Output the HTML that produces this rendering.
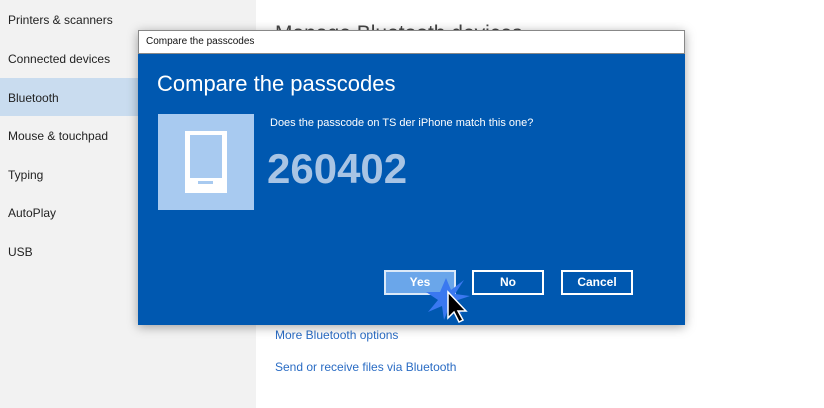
<!DOCTYPE html>
<html><head><style>
body{margin:0;width:824px;height:408px;overflow:hidden;background:#fff;font-family:"Liberation Sans",sans-serif;position:relative}
.side{position:absolute;left:0;top:0;width:256px;height:408px;background:#f2f2f2}
.it{position:absolute;left:8px;font-size:12px;color:#222}
.sel{position:absolute;left:0;top:78px;width:138px;height:38px;background:#c9dcef}
.link{position:absolute;left:275px;font-size:12px;color:#2a6cc4}
.dlg{position:absolute;left:138px;top:30px;width:547px;height:295px;box-shadow:0 2px 10px rgba(0,0,0,.35);background:#0058b0}
.tb{height:24px;background:#fff;border:1px solid #888;box-sizing:border-box;font-size:10px;line-height:22px;padding-left:7px;color:#111}
.btn{position:absolute;top:240px;width:72px;height:25px;border:2px solid #fff;box-sizing:border-box;color:#fff;font-size:12px;font-weight:bold;text-align:center;line-height:21px}
</style></head><body>
<div class="side">
<div class="sel"></div>
<div class="it" style="top:13px">Printers &amp; scanners</div>
<div class="it" style="top:52px">Connected devices</div>
<div class="it" style="top:91px">Bluetooth</div>
<div class="it" style="top:129px">Mouse &amp; touchpad</div>
<div class="it" style="top:168px">Typing</div>
<div class="it" style="top:206px">AutoPlay</div>
<div class="it" style="top:245px">USB</div>
</div>
<div style="position:absolute;left:275px;top:22px;font-size:21px;color:#444">Manage Bluetooth devices</div>
<div class="link" style="top:328px">More Bluetooth options</div>
<div class="link" style="top:360px">Send or receive files via Bluetooth</div>
<div class="dlg">
<div class="tb">Compare the passcodes</div>
<div style="position:absolute;left:19px;top:41px;font-size:22px;color:#fff">Compare the passcodes</div>
<div style="position:absolute;left:20px;top:84px;width:96px;height:96px;background:#a8caf0">
<div style="position:absolute;left:27px;top:17px;width:42px;height:62px;background:#fff"></div>
<div style="position:absolute;left:32px;top:21px;width:32px;height:43px;background:#a8caf0"></div>
<div style="position:absolute;left:40px;top:67px;width:15px;height:3px;background:#a8caf0"></div>
</div>
<div style="position:absolute;left:132px;top:87px;font-size:11px;color:#fff">Does the passcode on TS der iPhone match this one?</div>
<div style="position:absolute;left:129px;top:115px;font-size:42px;font-weight:bold;color:#a8c4e4">260402</div>
<div class="btn" style="left:246px;background:#6aa6ea;border-color:#dbe9f8">Yes</div>
<div class="btn" style="left:334px">No</div>
<div class="btn" style="left:423px">Cancel</div>
<svg style="position:absolute;left:286px;top:240px" width="50" height="60" viewBox="0 0 50 60">
<polygon points="22,8 27,20 40,10 31,24 46,26 31,31 38,44 26,35 20,50 18,36 4,42 14,30 2,22 16,22" fill="#3a78f0"/>
<path d="M24,22 L24,48 L30,42 L35,52 L39,50 L34,41 L42,41 Z" fill="#000" stroke="#fff" stroke-width="1.5"/>
</svg>
</div>
</body></html>
